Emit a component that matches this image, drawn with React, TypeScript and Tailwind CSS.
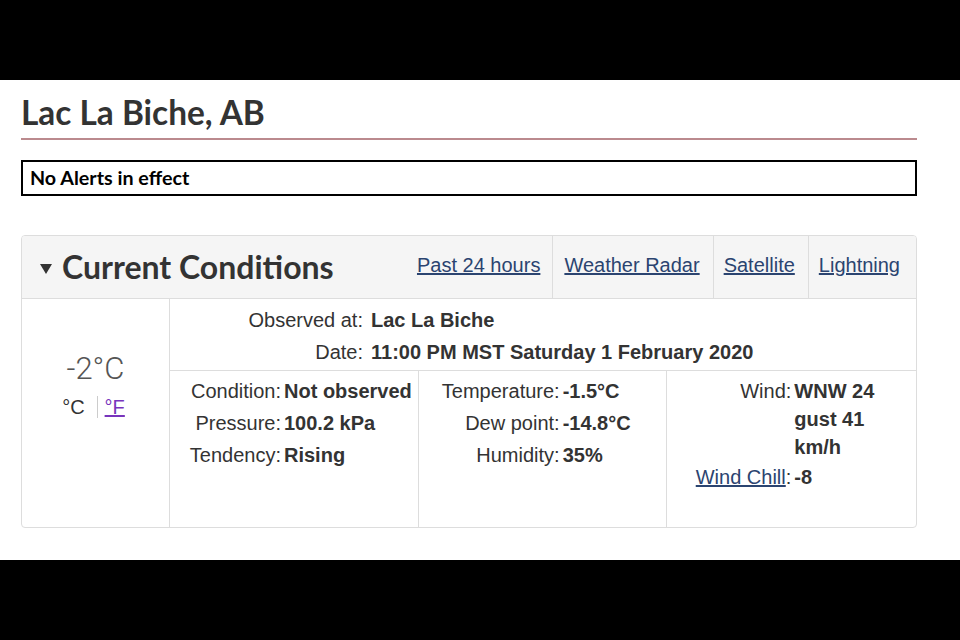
import React from "react";

const sans = { fontFamily: '"Liberation Sans", Arial, sans-serif' };

function Row({ label, labelW, children, valueW }: { label: React.ReactNode; labelW: string; children: React.ReactNode; valueW?: string }) {
  return (
    <div className="flex leading-[28px]">
      <div className={`${labelW} shrink-0 text-right text-[#333]`}>{label}</div>
      <div className={`pl-[3px] font-bold text-[#333] ${valueW ?? ""}`}>{children}</div>
    </div>
  );
}

export default function App() {
  return (
    <div className="w-[960px] h-[640px] bg-black flex flex-col">
      <div className="h-[80px] shrink-0" />
      <div className="h-[480px] shrink-0 bg-white pl-[21px]">
        <div className="w-[896px]">
          <div
            className="mt-[12px] text-[33.4px] leading-[40px] font-bold text-[#333] pb-[6px] border-b-2 border-[#bb8a8e]"
            style={{ fontFamily: "Lato, sans-serif" }}
          >
            Lac La Biche, AB
          </div>
          <div
            className="mt-[20px] h-[36px] border-2 border-black flex items-center pl-[7px] text-[19.7px] font-bold text-black"
            style={{ fontFamily: "Lato, sans-serif" }}
          >
            No Alerts in effect
          </div>

          <div className="mt-[39px] border border-[#ddd] rounded-[4px] overflow-hidden" style={sans}>
            <div className="h-[63px] bg-[#f5f5f5] border-b border-[#ddd] flex items-stretch pr-[4px]">
              <div className="flex items-center pl-[18px] flex-1">
                <svg width="12" height="10" viewBox="0 0 12 10" className="mr-[10px] mt-[4px]">
                  <path d="M0 0 L12 0 L6 10 Z" fill="#333" />
                </svg>
                <span className="text-[32px] font-bold text-[#333]" style={{ fontFamily: "Lato, sans-serif" }}>
                  Current Conditions
                </span>
              </div>
              <div className="flex items-stretch text-[20px]">
                <a className="flex items-center pl-[12px] pr-[12px] pb-[5px] text-[#2b4470] underline">Past 24 hours</a>
                <a className="flex items-center pl-[11px] pr-[13px] pb-[5px] text-[#2b4470] underline border-l border-[#ddd]">Weather Radar</a>
                <a className="flex items-center pl-[10px] pr-[13px] pb-[5px] text-[#2b4470] underline border-l border-[#ddd]">Satellite</a>
                <a className="flex items-center pl-[10px] pr-[12px] pb-[5px] text-[#2b4470] underline border-l border-[#ddd]">Lightning</a>
              </div>
            </div>

            <div className="flex h-[228px] text-[20px]">
              <div className="w-[148px] shrink-0 border-r border-[#ddd] flex flex-col items-center pt-[52px]">
                <div className="text-[31px] leading-[36px] font-light text-[#555]" style={{ fontFamily: "Roboto, sans-serif" }}>
                  -2°C
                </div>
                <div className="mt-[6px] flex items-center leading-[28px] -ml-[4px]">
                  <span className="text-[#333] pr-[12px]">°C</span>
                  <span className="w-px h-[22px] bg-[#ccc]" />
                  <a className="pl-[7px] text-[#7834bc] underline">°F</a>
                </div>
              </div>

              <div className="flex-1 flex flex-col">
                <div className="border-b border-[#ddd] pt-[7px] pb-[4px] flex flex-col gap-[4px]">
                  <div className="flex leading-[28px]">
                    <div className="w-[193px] shrink-0 text-right text-[#333]">Observed at:</div>
                    <div className="pl-[8px] font-bold text-[#333]">Lac La Biche</div>
                  </div>
                  <div className="flex leading-[28px]">
                    <div className="w-[193px] shrink-0 text-right text-[#333]">Date:</div>
                    <div className="pl-[8px] font-bold text-[#333]">11:00 PM MST Saturday 1 February 2020</div>
                  </div>
                </div>
                <div className="flex-1 grid grid-cols-3">
                  <div className="border-r border-[#ddd] pt-[6px] flex flex-col gap-[4px]">
                    <Row label="Condition:" labelW="w-[111px]">Not observed</Row>
                    <Row label="Pressure:" labelW="w-[111px]">100.2 kPa</Row>
                    <Row label="Tendency:" labelW="w-[111px]">Rising</Row>
                  </div>
                  <div className="border-r border-[#ddd] pt-[6px] flex flex-col gap-[4px]">
                    <Row label="Temperature:" labelW="w-[141px]">-1.5°C</Row>
                    <Row label="Dew point:" labelW="w-[141px]">-14.8°C</Row>
                    <Row label="Humidity:" labelW="w-[141px]">35%</Row>
                  </div>
                  <div className="pt-[6px] flex flex-col gap-[2px]">
                    <Row label="Wind:" labelW="w-[124px]" valueW="w-[90px]">WNW 24 gust 41 km/h</Row>
                    <Row
                      label={
                        <>
                          <a className="text-[#2b4470] underline">Wind Chill</a>:
                        </>
                      }
                      labelW="w-[124px]"
                    >
                      -8
                    </Row>
                  </div>
                </div>
              </div>
            </div>
          </div>
        </div>
      </div>
      <div className="flex-1" />
    </div>
  );
}
